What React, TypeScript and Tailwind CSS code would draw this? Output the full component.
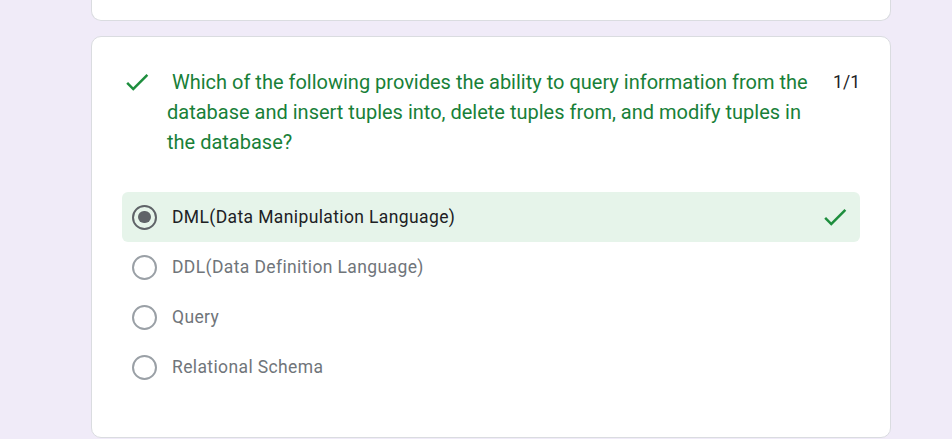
import React from "react";

type Option = {
  label: string;
  selected?: boolean;
  correct?: boolean;
};

const options: Option[] = [
  { label: "DML(Data Manipulation Language)", selected: true, correct: true },
  { label: "DDL(Data Definition Language)" },
  { label: "Query" },
  { label: "Relational Schema" },
];

function CheckIcon({ className }: { className?: string }) {
  return (
    <svg viewBox="0 0 24 24" className={className} aria-hidden="true">
      <path fill="currentColor" d="M9 16.17L4.83 12l-1.42 1.41L9 19 21 7l-1.41-1.41z" />
    </svg>
  );
}

function Radio({ checked }: { checked?: boolean }) {
  return (
    <span
      className={
        checked
          ? "flex h-[25px] w-[25px] shrink-0 items-center justify-center rounded-full border-[2.5px] border-[#5f6368]"
          : "flex h-[25px] w-[25px] shrink-0 items-center justify-center rounded-full border-[2.5px] border-[#9aa0a6]"
      }
    >
      {checked && <span className="h-[12.5px] w-[12.5px] rounded-full bg-[#5f6368]" />}
    </span>
  );
}

export default function App() {
  return (
    <div
      className="min-h-screen bg-[#f0ebf8] pl-[91px]"
      style={{ fontFamily: "Roboto, 'Noto Sans', sans-serif" }}
    >
      <div className="h-[21px] w-[800px] rounded-b-[10px] border border-t-0 border-[#dadce0] bg-white" />

      <div className="mt-[15px] w-[800px] rounded-[10px] border border-[#dadce0] bg-white px-[30px] pt-[30px] pb-[45px]">
        <div className="flex items-start">
          <CheckIcon className="h-[30px] w-[30px] shrink-0 text-[#1e8e3e]" />
          <p className="ml-[15px] flex-1 text-[20px] leading-[30px] text-[#188038]">
            {"\u00a0Which of the following provides the ability to query information from the database and insert tuples into, delete tuples from, and modify tuples in the database?"}
          </p>
          <span className="ml-[16px] text-[17.5px] leading-[30px] text-[#202124]">1/1</span>
        </div>

        <div className="mt-[35px] flex flex-col">
          {options.map((o) => (
            <div
              key={o.label}
              className={
                o.correct
                  ? "flex h-[50px] items-center rounded-[6px] bg-[#e6f4ea] px-[10px]"
                  : "flex h-[50px] items-center rounded-[6px] px-[10px]"
              }
            >
              <Radio checked={o.selected} />
              <span
                className={
                  o.selected
                    ? "ml-[15px] flex-1 text-[17.5px] tracking-[0.38px] text-[#202124]"
                    : "ml-[15px] flex-1 text-[17.5px] tracking-[0.38px] text-[#70757a]"
                }
              >
                {o.label}
              </span>
              {o.correct && <CheckIcon className="h-[30px] w-[30px] text-[#1e8e3e]" />}
            </div>
          ))}
        </div>
      </div>
    </div>
  );
}
